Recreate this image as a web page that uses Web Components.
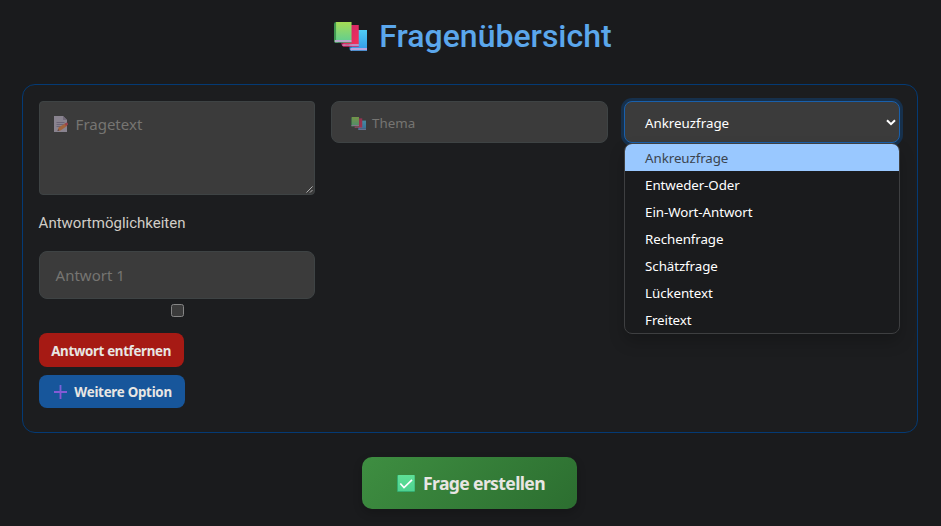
<!DOCTYPE html>
<html lang="de">
<head>
<meta charset="utf-8">
<title>Fragenübersicht</title>
<style>
html,body{margin:0;height:100%;background:#1a1b1d;overflow:hidden}
body{font-family:"Noto Sans","Open Sans",sans-serif}
</style>
</head>
<body>
<question-page></question-page>
<script>
const define = (name, html, setup) => customElements.define(name, class extends HTMLElement {
  constructor() {
    super();
    const t = document.createElement('template');
    t.innerHTML = '<style>*{box-sizing:border-box}</style>' + html;
    this.attachShadow({mode: 'open'}).append(t.content.cloneNode(true));
  }
  connectedCallback() {
    if (setup) setup(this.shadowRoot, this);
  }
});

const icons = {
  books: `<svg viewBox="0 0 32 29" preserveAspectRatio="none"><defs>
    <linearGradient id="g" x2="0" y2="1"><stop stop-color="#a5dc55"/><stop offset="1" stop-color="#66cf8c"/></linearGradient>
    <linearGradient id="r" x2="1" y2="1"><stop stop-color="#c9246c"/><stop offset="1" stop-color="#f43158"/></linearGradient>
    <linearGradient id="b" x2="0" y2="1"><stop stop-color="#50cdf5"/><stop offset="1" stop-color="#369fe9"/></linearGradient></defs>
    <path fill="#207fb5" d="M15 10q0-2 2-2h2v21h-2q-2 0-2-2z"/><path fill="url(#b)" d="M17 8h15v18H17z"/><path fill="#b8a4df" d="M16 26h16v3H17q-2-1-1-3z"/><path fill="#3389c8" d="M17 28.2h15v.8H17z"/>
    <path fill="#9d1854" d="M7 5q0-2 2-2h2v21H8l-1-2z"/><path fill="url(#r)" d="M9 3h15v19.5H9z"/><path fill="#e2b4df" d="M8 22.4h16v1.3H9q-1.500 0-1-1.300z"/><path fill="#d72363" d="M8 23.7h16v1H9z"/>
    <path fill="#3f9650" d="M0 2q0-2 2-2h2v21H2q-2 0-2-2z"/><path fill="url(#g)" d="M2 0h15v18H2z"/><path fill="#b9a9cb" d="M1 18h16v2.300H2q-2 0-1-2.300z"/><path fill="#499d65" d="M1 20.2h16v.8H2z"/></svg>`,
  memo: `<svg viewBox="0 0 15 16"><path fill="#c9bfd5" d="M0 0h9l4 4v12H0z"/><path fill="#9f91af" d="M9 0v4h4z"/><path stroke="#9587a7" d="M2.5 6.5h8M2.5 8.5h8M2.5 10.5h5"/><path fill="#f68640" d="m3.5 15 1-3.5L11 7.5l2 2.5-6.5 4.5z"/><path fill="#e64659" d="m10.5 7.8 1.7-1.1q1-.4 1.7.7.5 1-.3 1.5L12 10.1z"/><path fill="#554b60" d="m3.5 15 .6-2 1.2 1.5z"/></svg>`,
  plus: `<svg viewBox="0 0 13 14"><defs><linearGradient id="p" x2="0" y2="1"><stop stop-color="#7665d9"/><stop offset="1" stop-color="#9150d1"/></linearGradient></defs><path fill="url(#p)" d="M5.6 0h1.8v6H13v1.9H7.4V14H5.6V7.9H0V6h5.6z"/></svg>`,
  check: `<svg viewBox="0 0 18 17"><defs><linearGradient id="c" x2="0" y2="1"><stop stop-color="#5fe096"/><stop offset="1" stop-color="#4ed391"/></linearGradient></defs><rect width="18" height="17" rx="1" fill="#35ad72"/><rect x="1" width="16.5" height="16" rx=".6" fill="url(#c)"/><path d="m3.3 8.5 3.7 4 8-7.7" fill="none" stroke="#fff" stroke-width="1.7"/></svg>`
};

define('emoji-icon', `<style>:host{display:block;flex:none}span,svg{display:block;width:100%;height:100%}</style><span></span>`,
  (root, host) => { root.querySelector('span').innerHTML = icons[host.getAttribute('kind')]; });

define('page-title', `<style>
  :host{display:flex;justify-content:center;align-items:center;height:72px;margin-left:5px}
  emoji-icon{width:33px;height:29px;margin:1px 12px 0 1px}
  h1{margin:0;font:500 32px/40px Roboto,sans-serif;color:#5ba7ec}
</style><emoji-icon kind="books"></emoji-icon><h1><slot></slot></h1>`);

define('text-field', `<style>
  :host{display:flex;align-items:center;box-sizing:border-box;height:42px;padding:2px 19px 0;border:1px solid #3e4344;border-radius:8px;background:#3b3b3b;color:#767572;font-size:13.333px;line-height:20px}
  :host([large]){height:48px;padding:0 16px 1px;font-size:15px}
  :host([area]){height:94px;padding:12px 13px;border-radius:4px;font-size:15px;align-items:flex-start;position:relative}
  .grip{display:none;position:absolute;right:1px;bottom:1px;width:7px;height:7px}
  :host([area]) .grip{display:block}
</style><slot name="icon"></slot><span><slot></slot></span>
<svg class="grip" viewBox="0 0 8 8"><path d="m.5 7.5 7-7M4.500 7.5l3-3" stroke="#d0d0d0" stroke-width=".9" fill="none"/></svg>`);

define('check-box', `<style>:host{display:block;box-sizing:border-box;width:13px;height:13px;border:1px solid #858585;border-radius:2.5px;background:#3b3b3b}</style>`);

define('action-button', `<style>
  :host{display:flex;align-items:center;justify-content:center;box-sizing:border-box;width:max-content;border-radius:8px;color:#e8e6e3;font-weight:700;font-size:13.333px;white-space:nowrap;background:#a61a14}
  :host([tone=blue]){background:#17569b}
  :host([tone=green]){background:linear-gradient(135deg,#3e8e41,#2c6e30);border-radius:10px;font-size:17.6px;box-shadow:0 4px 10px #0003}
</style><slot name="icon"></slot><span><slot></slot></span>`);

define('select-option', `<style>
  :host{display:flex;align-items:center;height:27px;padding-left:20.5px;font-size:13.333px;line-height:20px;letter-spacing:-.08px;color:#fff}
  :host([selected]){background:#99c8ff;color:#3b444e}
</style><slot></slot>`);

define('select-menu', `<style>
  :host{display:block;position:relative;height:42px}
  .field{display:flex;align-items:center;justify-content:space-between;height:42px;padding:2px 3px 0 20.4px;border:1px solid #1960ac;border-radius:8px;background:#3b3b3b;color:#fff;font-size:13.333px;line-height:20px;box-shadow:0 0 0 3px #16304c}
  svg{width:10px;height:7px;margin-top:-1px}
  .list{position:absolute;z-index:2;top:42px;left:0;right:0;border:1px solid #3e3f41;border-radius:8px;overflow:hidden;background:#1a1b1d;box-shadow:0 8px 16px #0003}
</style>
<div class="field"><slot name="value"></slot><svg viewBox="0 0 10 7"><path d="m1 1.2 4 4 4-4" fill="none" stroke="#fff" stroke-width="2"/></svg></div>
<div class="list"><slot></slot></div>`);

define('question-page', `<style>
  :host{display:flex;flex-direction:column;width:941px;height:526px;padding:0 23px 0 22px;box-sizing:border-box}
  .panel{display:grid;grid-template-columns:repeat(3,minmax(0,1fr));gap:16px;align-items:start;margin-top:12px;height:349px;padding:16px 16.9px 16px 15.6px;border:1px solid #043a74;border-radius:13px;background:#1c1d1f}
  .answers{display:flex;flex-direction:column}
  h2{margin:17px 0 17px;font:400 15px/22px Roboto,sans-serif;color:#d1cdc7}
  check-box{align-self:center;margin:5px 0 16px 1px}
  .memo{width:15px;height:16px;margin:2px 7px 0 1px}
  .books{width:15px;height:13px;margin:1px 6px 0 0}
  .plus{width:13px;height:14px;margin:1px 7px 0 3px}
  .check{width:18px;height:17px;margin-right:8px}
  .remove{width:145px;height:34px;padding-top:2px;letter-spacing:-.33px}
  .more{width:146px;height:33px;margin-top:8px;letter-spacing:-.26px}
  .create{width:215px;height:52px;padding-left:4px;align-self:center;margin:24px 2px 0 0;letter-spacing:-.65px}
</style>
<page-title>Fragenübersicht</page-title>
<section class="panel">
  <div class="answers">
    <text-field area><emoji-icon slot="icon" class="memo" kind="memo" style="opacity:.55"></emoji-icon>Fragetext</text-field>
    <h2>Antwortmöglichkeiten</h2>
    <text-field large>Antwort 1</text-field>
    <check-box></check-box>
    <action-button class="remove">Antwort entfernen</action-button>
    <action-button class="more" tone="blue"><emoji-icon slot="icon" class="plus" kind="plus"></emoji-icon>Weitere Option</action-button>
  </div>
  <text-field><emoji-icon slot="icon" class="books" kind="books" style="opacity:.55"></emoji-icon>Thema</text-field>
  <select-menu>
    <span slot="value">Ankreuzfrage</span>
    <select-option selected>Ankreuzfrage</select-option>
    <select-option>Entweder-Oder</select-option>
    <select-option>Ein-Wort-Antwort</select-option>
    <select-option>Rechenfrage</select-option>
    <select-option>Schätzfrage</select-option>
    <select-option>Lückentext</select-option>
    <select-option>Freitext</select-option>
  </select-menu>
</section>
<action-button class="create" tone="green"><emoji-icon slot="icon" class="check" kind="check"></emoji-icon>Frage erstellen</action-button>`);
</script>
</body>
</html>
